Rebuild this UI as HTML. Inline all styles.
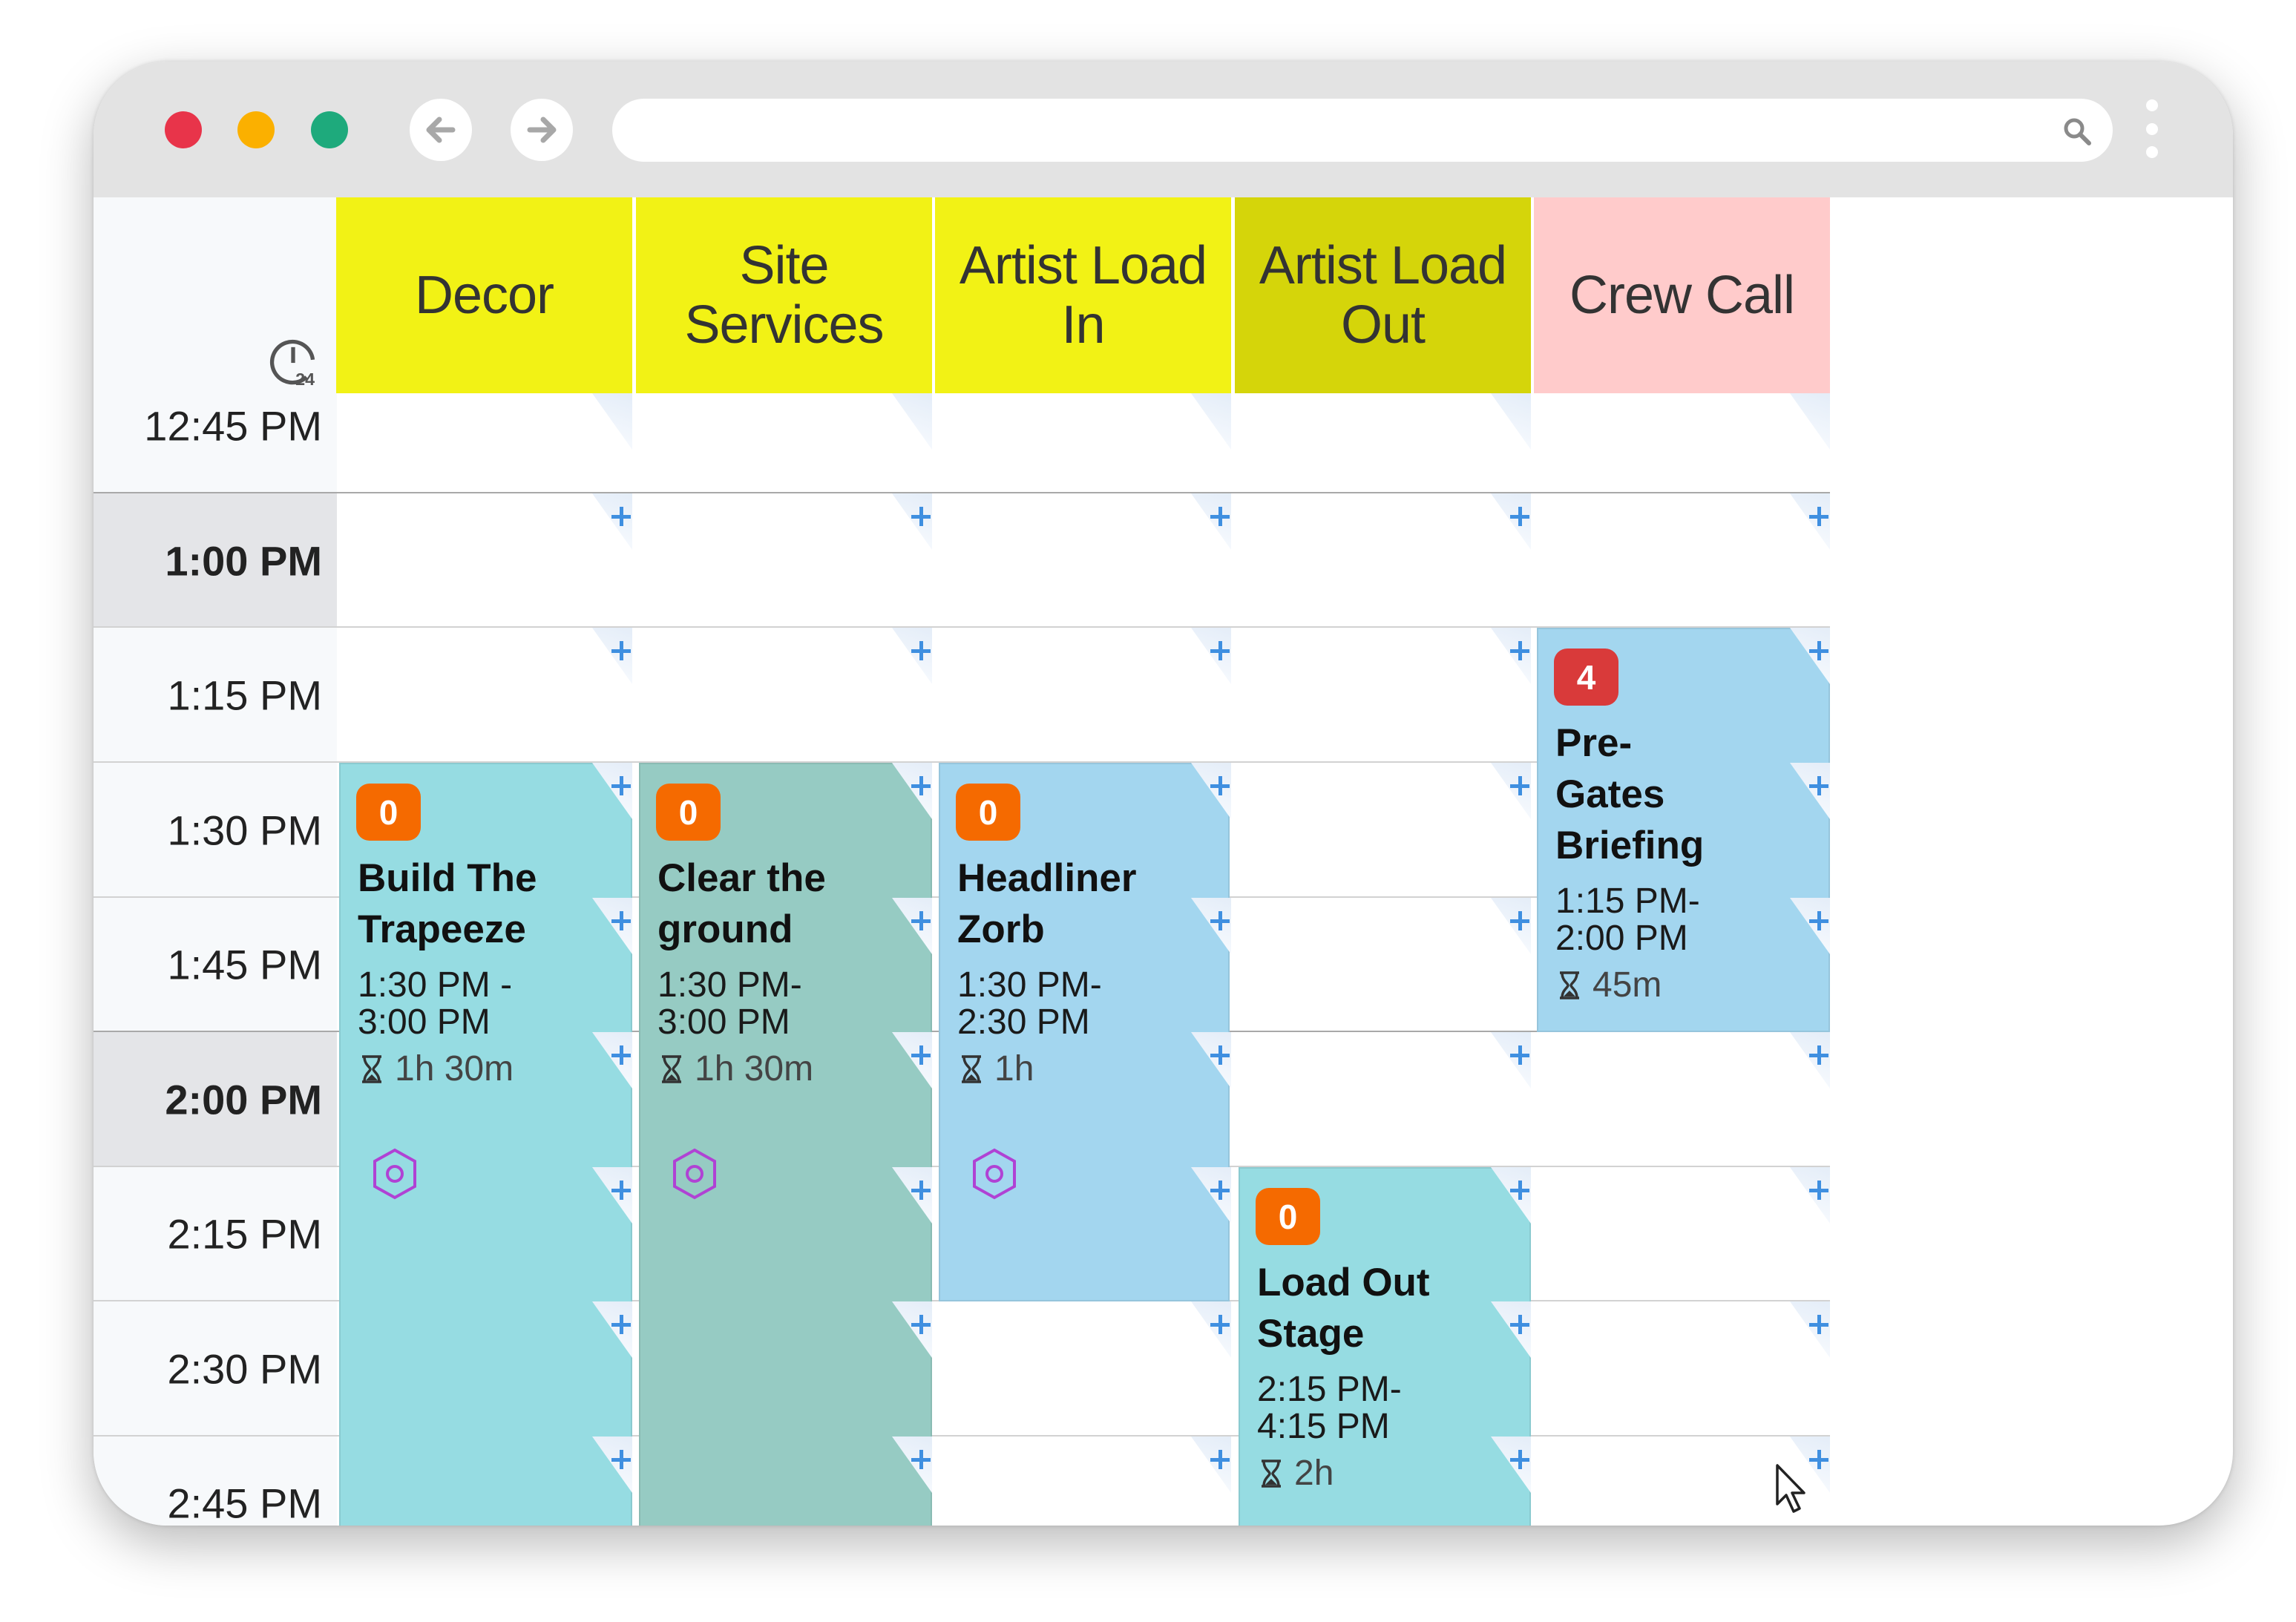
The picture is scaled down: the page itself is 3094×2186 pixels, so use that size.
<!DOCTYPE html>
<html><head><meta charset="utf-8">
<style>
*{margin:0;padding:0;box-sizing:border-box}
html,body{width:3094px;height:2186px;background:#fff;overflow:hidden;font-family:"Liberation Sans",Arial,sans-serif}
.win{position:absolute;left:126px;top:83px;width:2883px;height:1973px;border-radius:100px;background:#fff;overflow:hidden;box-shadow:0 24px 70px rgba(0,0,0,.28),0 0 6px rgba(0,0,0,.15)}
.bar{position:absolute;left:0;top:0;width:100%;height:183px;background:#e3e3e3}
.dot{position:absolute;width:50px;height:50px;border-radius:50%;top:67px}
.nav{position:absolute;top:50px;width:84px;height:84px;border-radius:50%;background:#fff}
.addr{position:absolute;left:699px;top:50px;width:2022px;height:85px;border-radius:43px;background:#fff}
.abs{position:absolute}
.tcol{position:absolute;left:0;top:183px;width:328px;height:1790px;background:#f7f9fb}
.hdr{position:absolute;top:183px;height:264px;display:flex;align-items:center;justify-content:center;text-align:center;font-size:72px;line-height:80px;color:#333;letter-spacing:-1px}
.tl{position:absolute;left:0;width:308px;text-align:right;font-size:56px;color:#222;transform:translateY(-50%)}
.tl.b{font-weight:bold}
.hl{position:absolute;height:2px;background:#cfcfcf}
.cell{position:absolute;width:54px;height:76px}
.tri{position:absolute;right:0;top:0;width:54px;height:76px;clip-path:polygon(0 0,100% 0,100% 100%);background:linear-gradient(200deg,#e4edf8,#fafcff)}
.plus{position:absolute;right:2px;top:18px;width:26px;height:26px}
.plus:before,.plus:after{content:"";position:absolute;background:#3f8fe0}
.plus:before{left:11px;top:0;width:5px;height:26px}
.plus:after{left:0;top:11px;width:26px;height:5px}
.ev{position:absolute;border:2px solid rgba(0,0,0,.08)}
.badge{position:absolute;width:87px;height:77px;border-radius:18px;color:#fff;font-size:46px;font-weight:bold;display:flex;align-items:center;justify-content:center}
.ttl{position:absolute;font-size:53px;font-weight:bold;line-height:69px;color:#111}
.tm{position:absolute;font-size:48px;line-height:50px;color:#1a1a1a}
.dur{position:absolute;font-size:48px;color:#444;display:flex;align-items:center;gap:14px}
</style></head><body>
<div class="win">
  <div class="bar"></div>
  <div class="dot" style="left:96px;background:#e8344a"></div>
  <div class="dot" style="left:194px;background:#fbb000"></div>
  <div class="dot" style="left:293px;background:#1eaa7c"></div>
  <div class="nav" style="left:426px"><svg width="84" height="84" viewBox="0 0 84 84"><path d="M58 42H27M40 28L26 42L40 56" stroke="#a8a8a8" stroke-width="7" fill="none" stroke-linecap="round" stroke-linejoin="round"/></svg></div>
  <div class="nav" style="left:562px"><svg width="84" height="84" viewBox="0 0 84 84"><path d="M26 42H57M44 28L58 42L44 56" stroke="#a8a8a8" stroke-width="7" fill="none" stroke-linecap="round" stroke-linejoin="round"/></svg></div>
  <div class="addr"></div>
  <svg class="abs" style="left:2652px;top:73px" width="44" height="44" viewBox="0 0 44 44"><circle cx="17" cy="17" r="11" stroke="#8a8a8a" stroke-width="5" fill="none"/><path d="M25 25L37 37" stroke="#8a8a8a" stroke-width="6" stroke-linecap="round"/></svg>
  <div class="abs" style="left:2766px;top:51px;width:16px;height:16px;border-radius:50%;background:#fff"></div>
  <div class="abs" style="left:2766px;top:83px;width:16px;height:16px;border-radius:50%;background:#fff"></div>
  <div class="abs" style="left:2766px;top:114px;width:16px;height:16px;border-radius:50%;background:#fff"></div>

  <div class="tcol"></div>
  <div class="abs" style="left:0;top:582px;width:328px;height:181px;background:#e4e5e8"></div>
  <div class="abs" style="left:0;top:1308px;width:328px;height:182px;background:#e4e5e8"></div>
  <svg class="abs" style="left:234px;top:370px" width="70" height="70" viewBox="0 0 66 66"><path d="M50 52A26 26 0 1 1 58 30" stroke="#555" stroke-width="5" fill="none"/><path d="M33 14V34" stroke="#555" stroke-width="5"/><text x="36" y="62" font-size="22" font-family="Liberation Sans" fill="#555" font-weight="bold">24</text></svg>

  <div class="hdr" style="left:327px;width:399px;background:#f2f215">Decor</div>
  <div class="hdr" style="left:731px;width:399px;background:#f2f215">Site<br>Services</div>
  <div class="hdr" style="left:1134px;width:399px;background:#f2f215">Artist Load<br>In</div>
  <div class="hdr" style="left:1538px;width:399px;background:#d5d50a">Artist Load<br>Out</div>
  <div class="hdr" style="left:1941px;width:399px;background:#ffcbcb">Crew Call</div>

  <div id="grid"></div>

  <div class="tl" style="top:491px">12:45 PM</div>
  <div class="tl b" style="top:673px">1:00 PM</div>
  <div class="tl" style="top:854px">1:15 PM</div>
  <div class="tl" style="top:1036px">1:30 PM</div>
  <div class="tl" style="top:1217px">1:45 PM</div>
  <div class="tl b" style="top:1399px">2:00 PM</div>
  <div class="tl" style="top:1580px">2:15 PM</div>
  <div class="tl" style="top:1762px">2:30 PM</div>
  <div class="tl" style="top:1943px">2:45 PM</div>

  <div id="events"></div>

  <svg class="abs" style="left:2265px;top:1888px" width="54" height="72" viewBox="0 0 54 72"><path d="M4 4V56L16 44L26 66L34 62L24 41H40Z" fill="#fff" stroke="#222" stroke-width="3.5" stroke-linejoin="round"/></svg>
</div>
<script>
const cols=[327,731,1134,1538,1941], W=399;
const rows=[447,582,763,945,1127,1308,1490,1671,1853];
let g='';
for(let i=1;i<rows.length;i++){
  const y=rows[i]-2; const dark=(i==1||i==5);
  g+=`<div class="hl" style="left:0;top:${y}px;width:2340px;background:${dark?'#a9a9a9':'#d2d2d2'}"></div>`;
}
document.getElementById('grid').innerHTML=g;
const hg=`<svg width="34" height="40" viewBox="0 0 34 40"><path d="M4 3H30M4 37H30M7 3C7 14 15 17 15 20C15 23 7 26 7 37H27C27 26 19 23 19 20C19 17 27 14 27 3" stroke="#333" stroke-width="3.5" fill="none"/><path d="M9 35L17 27L25 35Z" fill="#333"/></svg>`;
const hex=`<svg width="70" height="72" viewBox="0 0 70 72"><path d="M35 4L62 19V53L35 68L8 53V19Z" stroke="#b042d4" stroke-width="4" fill="none"/><circle cx="35" cy="36" r="10" stroke="#b042d4" stroke-width="4" fill="none"/></svg>`;
function ev(x,y,w,h,bg,badge,bc,title,t1,t2,dur,hx){
  let s=`<div class="ev" style="left:${x}px;top:${y}px;width:${w}px;height:${h}px;background:${bg}"></div>`;
  const L=x+25;
  s+=`<div class="badge" style="left:${L-2}px;top:${y+28}px;background:${bc}">${badge}</div>`;
  let ty=y+121;
  s+=`<div class="ttl" style="left:${L}px;top:${ty}px">${title.join('<br>')}</div>`;
  ty+=title.length*69+16;
  s+=`<div class="tm" style="left:${L}px;top:${ty}px">${t1}<br>${t2}</div>`;
  s+=`<div class="dur" style="left:${L+2}px;top:${ty+110}px">${hg}<span>${dur}</span></div>`;
  if(hx) s+=`<div class="abs" style="left:${L+15}px;top:${y+518}px">${hex}</div>`;
  return s;
}
let e='';
e+=ev(331,945,395,1040,'#96dce2','0','#f56a00',['Build The','Trapeeze'],'1:30 PM -','3:00 PM','1h 30m',1);
e+=ev(735,945,395,1040,'#96cbc3','0','#f56a00',['Clear the','ground'],'1:30 PM-','3:00 PM','1h 30m',1);
e+=ev(1139,945,392,726,'#a3d6ef','0','#f56a00',['Headliner','Zorb'],'1:30 PM-','2:30 PM','1h',1);
e+=ev(1543,1490,394,500,'#96dce2','0','#f56a00',['Load Out','Stage'],'2:15 PM-','4:15 PM','2h',0);
e+=`<div style="position:absolute;left:1945px;top:763px;width:395px;height:545px;overflow:hidden">`+
  ev(0,0,395,545,'#a3d6ef','4','#d93a3a',['Pre-','Gates','Briefing'],'1:15 PM-','2:00 PM','45m',0)+`</div>`;
document.getElementById('events').innerHTML=e;
let o='';
for(let r=0;r<rows.length;r++){for(const c of cols){o+=`<div class="cell" style="left:${c+W-54}px;top:${rows[r]}px"><div class="tri"></div>${r>0?'<div class="plus"></div>':''}</div>`;}}
document.getElementById('events').insertAdjacentHTML('beforeend',o);
</script>
</body></html>
